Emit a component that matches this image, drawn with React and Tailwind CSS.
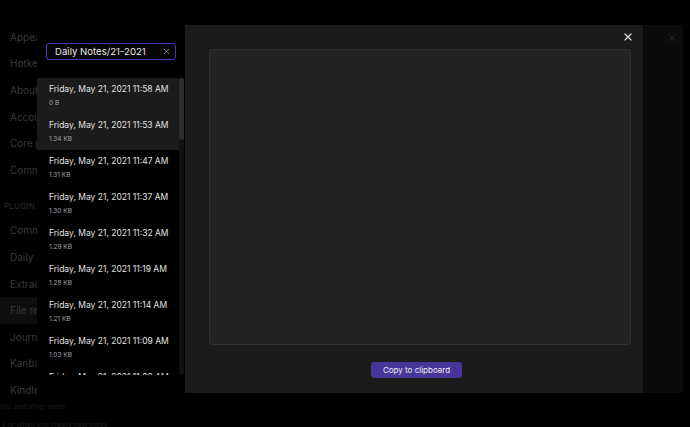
import React from 'react';
import { X } from 'lucide-react';

const sidebarTop = ['Appearance', 'Hotkeys', 'About', 'Account', 'Core plugins', 'Community plugins'];
const sidebarPlugins = ['Command palette', 'Daily notes', 'Extract highlights', 'File recovery', 'Journals', 'Kanban', 'Kindle Highlights'];

const snapshots = [
  { time: '11:58 AM', size: '0 B' },
  { time: '11:53 AM', size: '1.34 KB' },
  { time: '11:47 AM', size: '1.31 KB' },
  { time: '11:37 AM', size: '1.30 KB' },
  { time: '11:32 AM', size: '1.29 KB' },
  { time: '11:19 AM', size: '1.28 KB' },
  { time: '11:14 AM', size: '1.21 KB' },
  { time: '11:09 AM', size: '1.03 KB' },
  { time: '11:03 AM', size: '1.01 KB' },
];

const SidebarItem = ({ label, active }) => (
  <div className={`h-[26.6px] w-[37px] overflow-hidden flex items-center pl-[10px] text-[10px] text-[#3a3a3a] whitespace-nowrap ${active ? 'bg-[#0e0e0e]' : ''}`}>
    {label}
  </div>
);

const App = () => {
  return (
    <div
      className="relative w-[690px] h-[427px] bg-black overflow-hidden flex"
      style={{ fontFamily: 'Inter, "Noto Sans", sans-serif' }}
    >
      {/* settings sidebar behind */}
      <div className="w-[37px] shrink-0 pt-[24px]">
        {sidebarTop.map((s) => (
          <SidebarItem key={s} label={s} />
        ))}
        <div className="h-[34px] w-[37px] overflow-hidden flex items-end pl-[4px] pb-[8px] text-[8px] leading-none tracking-wide text-[#2c2c2c] whitespace-nowrap">
          PLUGIN OPTIONS
        </div>
        {sidebarPlugins.map((s) => (
          <SidebarItem key={s} label={s} active={s === 'File recovery'} />
        ))}
        <div className="mt-[-2px] text-[7px] leading-[10px] text-[#1c1c1c] whitespace-nowrap">this and other notes</div>
        <div className="mt-[8px] pl-[2px] text-[7px] leading-[10px] text-[#1c1c1c] whitespace-nowrap">s or when you create new notes</div>
      </div>

      {/* settings content pane behind */}
      <div className="ml-[148px] mt-[25px] w-[498px] h-[368px] bg-[#0b0b0b] flex justify-end">
        <X size={12} strokeWidth={2} className="mt-[7px] mr-[5px] text-[#2b2b2b]" />
      </div>

      {/* file suggestion popup */}
      <div className="absolute left-[37px] top-0 w-[148px] h-[400px] bg-black">
        <div className="ml-[9px] mt-[43px] w-[130px] h-[17px] border border-[#4a3aa8] rounded-[3px] bg-[#050505] flex items-center pl-[8px] pr-[4px]">
          <span className="flex-1 text-[9.6px] text-[#e6e6e6] leading-none">Daily Notes/21-2021</span>
          <X size={9} strokeWidth={2} className="text-[#a0a0a0]" />
        </div>
        <div className="relative mt-[18px] h-[297px] overflow-hidden">
          <div className="w-[142px]">
            {snapshots.map((s, i) => (
              <div key={s.time} className={`h-[36px] pl-[12px] pt-[6px] ${i < 2 ? 'bg-[#1b1b1b]' : ''}`}>
                <div className="text-[8.5px] leading-[10px] text-[#e2e2e2] whitespace-nowrap">Friday, May 21, 2021 {s.time}</div>
                <div className="mt-[5px] text-[6.5px] leading-[8px] text-[#a5a5a5]">{s.size}</div>
              </div>
            ))}
          </div>
          <div className="absolute right-[1px] top-0 w-[5px] h-[297px] bg-[#111] rounded-full">
            <div className="w-[5px] h-[62px] bg-[#2e2e2e] rounded-full" />
          </div>
        </div>
      </div>

      {/* file recovery modal */}
      <div className="absolute left-[185px] top-[25px] w-[458px] h-[368px] bg-[#1b1b1b] flex flex-col">
        <div className="h-[24px] flex justify-end items-center pr-[9px]">
          <X size={12} strokeWidth={2.5} className="text-[#dadada]" />
        </div>
        <div className="ml-[24px] w-[422px] h-[296px] bg-[#232323] border border-[#303030] rounded-[3px]" />
        <div className="mt-[10px] ml-[186px]">
          <button className="w-[91px] h-[16px] bg-[#483699] rounded-[3px] text-[8px] leading-none text-[#f0f0f0]">
            Copy to clipboard
          </button>
        </div>
      </div>
    </div>
  );
};

export default App;
